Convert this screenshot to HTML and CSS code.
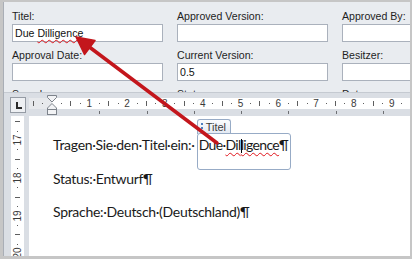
FILE: index.html
```html
<!DOCTYPE html>
<html>
<head>
<meta charset="utf-8">
<link rel="stylesheet" href="styles.css">
</head>
<body>
<div class="window">
  <div class="inner">
    <div class="panel">
      <div class="col">
        <div class="field"><div class="lbl">Titel:</div><div class="input">Due <span class="sq">Dilligence</span></div></div>
        <div class="field"><div class="lbl">Approval Date:</div><div class="input"></div></div>
        <div class="field"><div class="lbl">Sprache:</div><div class="input"></div></div>
      </div>
      <div class="col">
        <div class="field"><div class="lbl">Approved Version:</div><div class="input"></div></div>
        <div class="field"><div class="lbl">Current Version:</div><div class="input">0.5</div></div>
        <div class="field"><div class="lbl">Status:</div><div class="input"></div></div>
      </div>
      <div class="col">
        <div class="field"><div class="lbl">Approved By:</div><div class="input"></div></div>
        <div class="field"><div class="lbl">Besitzer:</div><div class="input"></div></div>
        <div class="field"><div class="lbl">Datum:</div><div class="input"></div></div>
      </div>
    </div>

    <div class="rulerbar">
      <div class="corner"><span class="tabl"></span></div>
      <div class="rulerwrap">
        <div class="hruler">
          <div class="hcells">
            <span class="c"><i class="d1"></i><i class="h"></i><i class="d3"></i></span>
            <span class="c"><i class="d1"></i><i class="h"></i><i class="d3"></i><b>1</b></span>
            <span class="c"><i class="d1"></i><i class="h"></i><i class="d3"></i><b>2</b></span>
            <span class="c"><i class="d1"></i><i class="h"></i><i class="d3"></i><b>3</b></span>
            <span class="c"><i class="d1"></i><i class="h"></i><i class="d3"></i><b>4</b></span>
            <span class="c"><i class="d1"></i><i class="h"></i><i class="d3"></i><b>5</b></span>
            <span class="c"><i class="d1"></i><i class="h"></i><i class="d3"></i><b>6</b></span>
            <span class="c"><i class="d1"></i><i class="h"></i><i class="d3"></i><b>7</b></span>
            <span class="c"><i class="d1"></i><i class="h"></i><i class="d3"></i><b>8</b></span>
            <span class="c"><i class="d1"></i><i class="h"></i><i class="d3"></i><b>9</b></span>
            <span class="c"><i class="d1"></i><i class="h"></i><i class="d3"></i><b>10</b></span>
          </div>
        </div>
        <div class="tabstops"></div>
      </div>
      <svg class="hourglass" width="12" height="21" viewBox="0 0 12 21">
        <path d="M1.5 0.5 H10.5 V2.5 L6 7 L1.5 2.5 Z" fill="#f2f3f5" stroke="#7d838b"/>
        <path d="M6 8.5 L10.5 13 V14.5 H1.5 V13 Z" fill="#f2f3f5" stroke="#7d838b"/>
        <rect x="1.5" y="14.5" width="9" height="5" fill="#f2f3f5" stroke="#7d838b"/>
      </svg>
    </div>

    <div class="docrow">
      <div class="vruler">
        <div class="vcells">
          <span class="v"><i class="d1"></i><i class="h"></i><i class="d3"></i><b>17</b></span>
          <span class="v"><i class="d1"></i><i class="h"></i><i class="d3"></i><b>18</b></span>
          <span class="v"><i class="d1"></i><i class="h"></i><i class="d3"></i><b>19</b></span>
          <span class="v"><i class="d1"></i><i class="h"></i><i class="d3"></i><b>20</b></span>
          <span class="v"><i class="d1"></i><i class="h"></i><i class="d3"></i><b>21</b></span>
        </div>
      </div>
      <div class="page">
        <p>Tragen·Sie·den·Titel·ein:·<span class="cc"><span class="cc-tab"><span class="grip"></span>Titel</span>Due·<span class="sq">Dil<span class="caret"></span>ligence</span>¶</span></p>
        <p>Status:·Entwurf¶</p>
        <p>Sprache:·Deutsch·(Deutschland)¶</p>
      </div>
    </div>
  </div>

  <svg class="arrow" width="412" height="259" viewBox="0 0 412 259">
    <line x1="217" y1="143" x2="88" y2="46" stroke="#c3161c" stroke-width="3.5" stroke-linecap="round"/>
    <path d="M76 37 L95 40.5 L84.5 54.5 Z" fill="#c3161c" stroke="#c3161c" stroke-width="1.5" stroke-linejoin="round"/>
  </svg>
</div>
</body>
</html>
```
FILE: styles.css
```css
html, body {
  margin: 0;
  padding: 0;
}
body {
  width: 412px;
  height: 259px;
  overflow: hidden;
  background: #c6c6c6;
  font-family: "Liberation Sans", Arial, sans-serif;
}
.window {
  position: relative;
  width: 412px;
  height: 259px;
  box-sizing: border-box;
  padding: 2px 2px 3px 3px;
  display: flex;
}
.inner {
  flex: 1;
  display: flex;
  flex-direction: column;
  border-left: 1px solid #a9aeb6;
  min-width: 0;
}

/* document information panel */
.panel {
  height: 90px;
  flex: none;
  box-sizing: border-box;
  background: #e9ecf0;
  display: flex;
  gap: 14px;
  padding: 6px 0 0 8px;
  overflow: hidden;
}
.col {
  width: 151px;
  flex: none;
}
.field {
  margin-bottom: 5px;
}
.lbl {
  font-size: 10.6px;
  line-height: 16px;
  height: 16px;
  color: #1e1e1e;
  white-space: nowrap;
}
.input {
  height: 18px;
  box-sizing: border-box;
  border: 1px solid #aab1bc;
  background: #fff;
  font-size: 10.6px;
  line-height: 16px;
  padding-left: 2px;
  color: #111;
  white-space: nowrap;
}
.sq {
  text-decoration: underline wavy #e0141b;
  text-decoration-thickness: 1px;
  text-decoration-skip-ink: none;
  text-underline-offset: 2px;
}

/* ruler bar */
.rulerbar {
  position: relative;
  height: 24px;
  flex: none;
  box-sizing: border-box;
  border-top: 1px solid #c5cad1;
  background: #dadee4;
  display: flex;
}
.corner {
  width: 16px;
  height: 16px;
  box-sizing: border-box;
  margin: 4px 0 0 6px;
  border: 1px solid #959ba4;
  background: #eef0f3;
  display: flex;
  align-items: center;
  justify-content: center;
}
.tabl {
  width: 4px;
  height: 5px;
  border-left: 2px solid #2b2b2b;
  border-bottom: 2px solid #2b2b2b;
  margin: 1px 0 0 1px;
}
.rulerwrap {
  flex: 1;
  margin-left: 3px;
  padding-top: 5px;
  min-width: 0;
}
.hruler {
  height: 11px;
  background: linear-gradient(to right, #e7e9ec 0 22.5px, #ffffff 22.5px);
  overflow: hidden;
}
.hcells {
  display: flex;
  margin-left: -15.3px;
  height: 100%;
}
.c {
  position: relative;
  flex: none;
  width: 37.8px;
  height: 100%;
}
.c i, .v i {
  position: absolute;
  background: #5e5e5e;
}
.c .d1, .c .d3 {
  top: 5px;
  width: 1px;
  height: 1px;
}
.c .d1 { left: 25%; }
.c .d3 { left: 75%; }
.c .h {
  left: 50%;
  top: 3px;
  width: 1px;
  height: 5px;
}
.c b {
  position: absolute;
  left: 100%;
  top: 0;
  transform: translateX(-50%);
  font-weight: normal;
  font-size: 10px;
  line-height: 11px;
  color: #3a3a3a;
}
.tabstops {
  height: 3px;
  margin: 2px 0 0 24px;
  background: repeating-linear-gradient(to right, transparent 0 46.25px, #6d6f73 46.25px 47.25px);
}
.hourglass {
  position: absolute;
  left: 42px;
  top: 2px;
}

/* document area */
.docrow {
  flex: 1;
  display: flex;
  background: #dadee4;
  min-height: 0;
}
.vruler {
  width: 13px;
  flex: none;
  margin: 0 5px 0 7px;
  background: #fff;
  overflow: hidden;
}
.vcells {
  display: flex;
  flex-direction: column;
  margin-top: -13.8px;
}
.v {
  position: relative;
  flex: none;
  height: 37.8px;
}
.v .d1, .v .d3 {
  left: 6px;
  width: 1px;
  height: 1px;
}
.v .d1 { top: 25%; }
.v .d3 { top: 75%; }
.v .h {
  top: 50%;
  left: 4px;
  width: 5px;
  height: 1px;
}
.v b {
  position: absolute;
  left: 1px;
  top: 100%;
  font-weight: normal;
  font-size: 10px;
  line-height: 11px;
  color: #3a3a3a;
  writing-mode: vertical-rl;
  transform: translateY(-50%) rotate(180deg);
}
.page {
  flex: 1;
  background: #fff;
  padding: 20px 0 0 24px;
  font-family: "Lato", "Open Sans", sans-serif;
  font-size: 14px;
  letter-spacing: -0.3px;
  color: #1a1a1a;
}
.page p {
  margin: 0 0 15.5px;
  line-height: 18px;
  white-space: nowrap;
}
.cc {
  position: relative;
  margin-left: 4px;
  letter-spacing: -0.65px;
}
.cc::after {
  content: "";
  position: absolute;
  left: -2px;
  right: -3px;
  top: -3px;
  height: 37px;
  border: 1px solid #97abc6;
  border-radius: 3px;
  box-sizing: border-box;
  pointer-events: none;
}
.cc-tab {
  position: absolute;
  left: -2px;
  top: -17px;
  height: 15px;
  box-sizing: border-box;
  padding: 0 4px 0 3px;
  border: 1px solid #97abc6;
  border-bottom: none;
  border-radius: 3px 3px 0 0;
  background: linear-gradient(#fbfcfe, #e3e9f2);
  font-family: "Liberation Sans", Arial, sans-serif;
  font-size: 11px;
  letter-spacing: 0;
  line-height: 14px;
  color: #3c3c3c;
  display: flex;
  align-items: center;
  gap: 3px;
}
.grip {
  width: 2px;
  height: 9px;
  background: repeating-linear-gradient(#4d7fc0 0 2px, transparent 2px 3.5px);
}
.caret {
  display: inline-block;
  width: 1px;
  height: 14px;
  margin-right: -1px;
  background: #000;
  vertical-align: -3px;
}

/* annotation arrow */
.arrow {
  position: absolute;
  left: 0;
  top: 0;
  pointer-events: none;
}
```
